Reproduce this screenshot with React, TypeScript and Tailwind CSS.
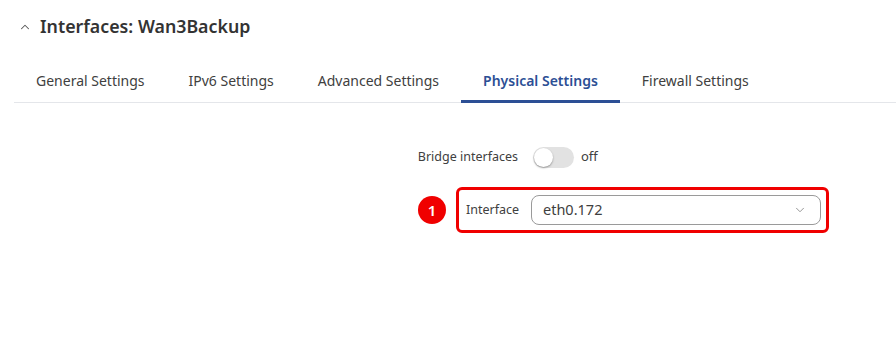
import { ChevronUp, ChevronDown } from "lucide-react";

const tabs = ["General Settings", "IPv6 Settings", "Advanced Settings", "Physical Settings", "Firewall Settings"];

export default function App() {
    const active = "Physical Settings";

    return (
        <div className="w-[896px] h-[359px] bg-white text-[#404040] font-['Noto_Sans',sans-serif] overflow-hidden">
            {/* Header */}
            <div className="flex items-center gap-[8px] pl-[18px] pt-[12px] h-[41px]">
                <ChevronUp className="w-[14px] h-[14px] text-[#555]" strokeWidth={1.75} />
                <h1 className="text-[17.8px] font-semibold text-[#333] leading-none">Interfaces: Wan3Backup</h1>
            </div>

            {/* Tabs */}
            <div className="ml-[14px] mt-[19px] flex border-b border-[#e4e6ea]">
                {tabs.map((tab) => (
                    <button
                        key={tab}
                        className={
                            tab === active
                                ? "px-[22px] h-[43px] text-[14px] font-semibold text-[#2c4f95] border-b-[3px] border-[#2c4f95] -mb-px"
                                : "px-[22px] h-[43px] text-[14px] text-[#404040] border-b-[3px] border-transparent -mb-px"
                        }
                    >
                        {tab}
                    </button>
                ))}
            </div>

            {/* Form */}
            <div className="flex flex-col mt-[43px]">
                <div className="flex items-center h-[22px]">
                    <div className="w-[518px] text-right text-[12.5px] text-[#404040]">Bridge interfaces</div>
                    <div className="ml-[15px] w-[41px] h-[21px] rounded-full bg-[#e2e2e2] relative">
                        <div className="absolute left-[1px] top-[1px] w-[19px] h-[19px] rounded-full bg-white shadow-[0_1px_2px_rgba(0,0,0,0.35)]" />
                    </div>
                    <span className="ml-[7px] text-[13px] text-[#404040]">off</span>
                </div>

                <div className="flex items-center mt-[19px] ml-[418px]">
                    <div className="w-[28px] h-[28px] rounded-full bg-[#f00000] text-white text-[15px] font-semibold flex items-center justify-center">1</div>
                    <div className="ml-[10px] w-[373px] h-[46px] border-[3px] border-[#f00000] rounded-[6px] flex items-center pl-[7px]">
                        <span className="w-[65px] text-[12.5px] text-[#404040]">Interface</span>
                        <div className="w-[290px] h-[30px] border border-[#9a9a9a] rounded-[8px] flex items-center justify-between pl-[11px] pr-[13px]">
                            <span className="text-[14.5px] text-[#404040]">eth0.172</span>
                            <ChevronDown className="w-[14px] h-[14px] text-[#888]" strokeWidth={1.5} />
                        </div>
                    </div>
                </div>
            </div>
        </div>
    );
}
